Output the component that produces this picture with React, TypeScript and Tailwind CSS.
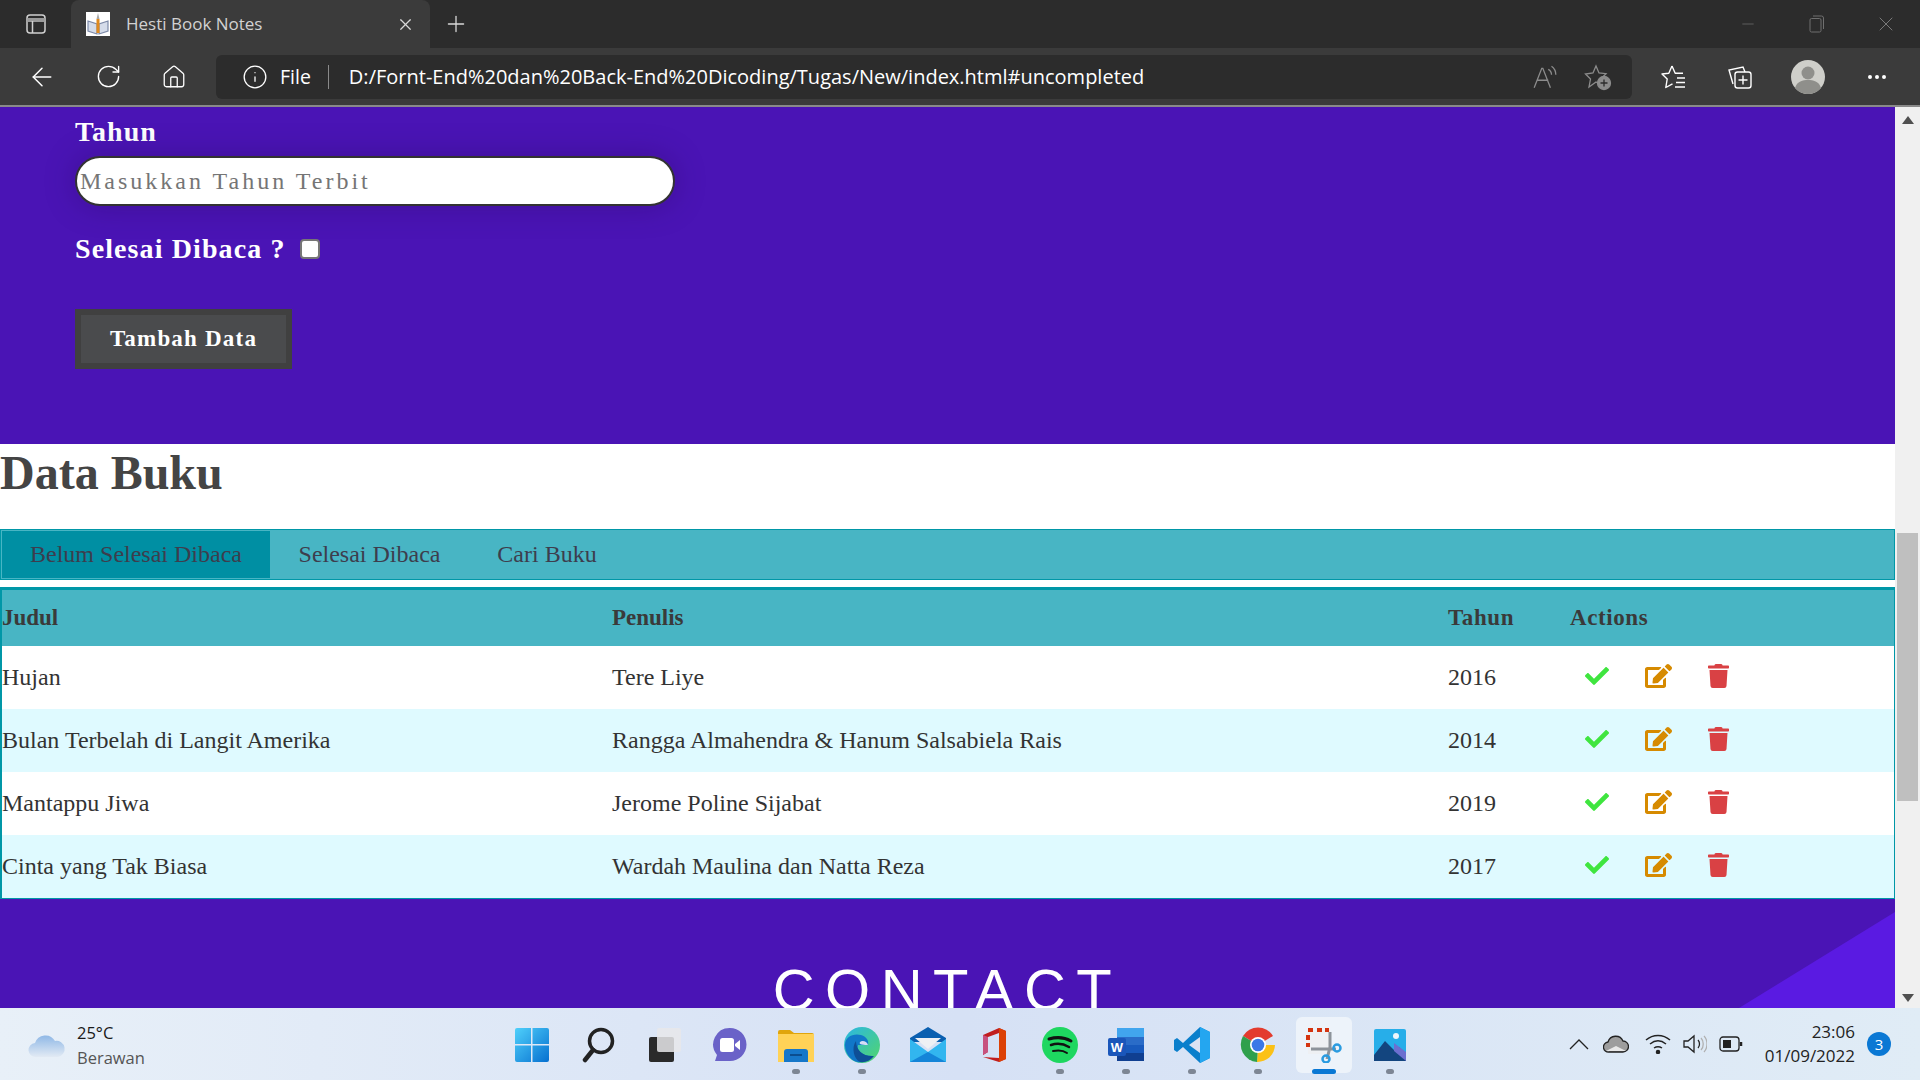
import {FaCheck, FaEdit, FaTrash} from "react-icons/fa";
import {Info, MoreHorizontal, Plus, RotateCw, ArrowLeft, Home, X, Minus} from "lucide-react";

const books = [
	{judul: "Hujan", penulis: "Tere Liye", tahun: "2016"},
	{judul: "Bulan Terbelah di Langit Amerika", penulis: "Rangga Almahendra & Hanum Salsabiela Rais", tahun: "2014"},
	{judul: "Mantappu Jiwa", penulis: "Jerome Poline Sijabat", tahun: "2019"},
	{judul: "Cinta yang Tak Biasa", penulis: "Wardah Maulina dan Natta Reza", tahun: "2017"},
];

function Favicon() {
	return (
		<svg width="24" height="24" viewBox="0 0 24 24">
			<rect width="24" height="24" fill="#fff" />
			<path d="M2 9l9 3v10l-9-3zM22 9l-9 3v10l9-3z" fill="#d5dcea" stroke="#7d8aa8" strokeWidth="1.2" />
			<rect x="10.5" y="7" width="3" height="14" fill="#e08a1e" />
			<path d="M10.5 7l1.5-6 1.5 6z" fill="#a8a8a8" />
		</svg>
	);
}

function BrowserChrome() {
	return (
		<div className="shrink-0 font-['Open_Sans',sans-serif]">
			<div className="flex h-12 items-end bg-[#2c2c2c]">
				<div className="flex h-12 w-[71px] items-center justify-center">
					<svg width="22" height="22" viewBox="0 0 22 22" fill="none" stroke="#d0d0d0" strokeWidth="1.5">
						<rect x="2" y="2" width="18" height="18" rx="3" />
						<path d="M2.5 7h17" strokeWidth="4" stroke="#9a9a9a" />
						<path d="M7.5 8v12" />
					</svg>
				</div>
				<div className="flex h-12 w-[359px] items-center rounded-t-lg bg-[#3b3b3b] pl-[15px] pr-[15px]">
					<Favicon />
					<span className="ml-[16px] flex-1 text-[17px] text-[#d2d2d2]">Hesti Book Notes</span>
					<X size={19} strokeWidth={1.5} color="#d8d8d8" />
				</div>
				<div className="flex h-12 w-[52px] items-center justify-center">
					<Plus size={26} strokeWidth={1.2} color="#d8d8d8" />
				</div>
				<div className="flex h-12 flex-1 items-center justify-end">
					<div className="flex w-[69px] justify-center"><Minus size={18} strokeWidth={1} color="#6f6f6f" /></div>
					<div className="flex w-[69px] justify-center">
						<svg width="16" height="18" viewBox="0 0 16 18" fill="none" stroke="#6f6f6f">
							<rect x="1" y="3.5" width="11" height="13.5" rx="1.5" />
							<path d="M4 1h8.5a2 2 0 0 1 2 2v11" />
						</svg>
					</div>
					<div className="flex w-[69px] justify-center"><X size={24} strokeWidth={1} color="#7a7a7a" /></div>
				</div>
			</div>
			<div className="flex h-[57px] items-center bg-[#3b3b3b]">
				<div className="flex w-[216px] items-center pl-[9px]">
					<div className="flex w-[66px] justify-center"><ArrowLeft size={30} strokeWidth={1.2} color="#fff" /></div>
					<div className="flex w-[66px] justify-center"><RotateCw size={27} strokeWidth={1.2} color="#fff" /></div>
					<div className="flex w-[66px] justify-center"><Home size={26} strokeWidth={1.2} color="#fff" /></div>
				</div>
				<div className="flex h-[44px] w-[1416px] items-center rounded-md bg-[#2c2c2c] pl-[26px] pr-[20px] text-white">
					<Info size={26} strokeWidth={1.2} />
					<span className="ml-[12px] text-[19.5px]">File</span>
					<span className="ml-[17px] h-[24px] w-px bg-[#8a8a8a]" />
					<span className="ml-[20px] flex-1 text-[20px]">
						D:/Fornt-End%20dan%20Back-End%20Dicoding/Tugas/New/index.html#uncompleted
					</span>
					<svg width="26" height="26" viewBox="0 0 24 24" fill="none" stroke="#8c8c8c" strokeWidth="1.2" className="mr-[26px]">
						<path d="M2 22L9 4h1l7 18M5 15h10" />
						<path d="M15 5c2 1 3 3 3 5M18 2c3 2 4 5 4 8" />
					</svg>
					<svg width="28" height="28" viewBox="0 0 28 28" fill="none" stroke="#8c8c8c" strokeWidth="1.3">
						<path d="M12 3l3 7 7 .7-5 5 1.500 7-6.500-3.700L5 24l1.500-8-5-5 7.500-1z" />
						<circle cx="20" cy="20" r="6.500" fill="#8c8c8c" />
						<path d="M20 16.500v7M16.500 20h7" stroke="#2c2c2c" />
					</svg>
				</div>
				<div className="flex flex-1 items-center pl-[9px]">
					<div className="flex w-[66px] justify-center">
						<svg width="28" height="28" viewBox="0 0 28 28" fill="none" stroke="#fff" strokeWidth="1.4" strokeLinejoin="round">
							<path d="M12 3l3.200 7.200H23M12 3L8.800 10.200 2 11l5.200 5-1.400 8.500 6.700-3.700" />
							<path d="M17 15h8M16 19.500h9M15 24h10" />
						</svg>
					</div>
					<div className="flex w-[66px] justify-center">
						<svg width="28" height="28" viewBox="0 0 28 28" fill="none" stroke="#fff" strokeWidth="1.4">
							<path d="M7 21L3 7l14-3 2 5" />
							<rect x="9" y="9" width="16" height="16" rx="2.500" />
							<path d="M17 12.500v9M12.500 17h9" />
						</svg>
					</div>
					<div className="flex w-[70px] justify-center">
						<svg width="34" height="34" viewBox="0 0 34 34">
							<circle cx="17" cy="17" r="17" fill="#cfcfca" />
							<circle cx="17" cy="13" r="6.500" fill="#8f8f8b" />
							<path d="M4 28c2-7 8-8 13-8s11 1 13 8a17 17 0 0 1-26 0z" fill="#8f8f8b" />
						</svg>
					</div>
					<div className="flex w-[68px] justify-center"><MoreHorizontal size={24} strokeWidth={2} color="#fff" /></div>
				</div>
			</div>
			<div className="h-[2px] bg-[#8a8a8a]" />
		</div>
	);
}

function FormSection() {
	return (
		<section className="flex h-[337px] shrink-0 flex-col items-start bg-[#4a14b5] pl-[75px] pt-[10px] text-white">
			<label className="text-[28px] font-bold leading-[30px] tracking-[1px]">Tahun</label>
			<input
				placeholder="Masukkan Tahun Terbit"
				className="mt-[9px] h-[50px] w-[600px] rounded-full border-2 border-[#333] bg-white pl-[3px] text-[24px] tracking-[3px] text-[#333] shadow-[0_0_30px_rgba(40,10,90,0.35)] outline-none placeholder:text-[#757575]"
			/>
			<div className="mt-[28px] flex items-center">
				<label className="text-[28px] font-bold leading-[30px] tracking-[1.100px]">Selesai Dibaca ?</label>
				<input type="checkbox" className="ml-[15px] h-[20px] w-[20px] appearance-none rounded-[4px] border-2 border-[#767676] bg-white" />
			</div>
			<button className="mt-[45px] h-[60px] w-[217px] border-[6px] border-[#404040] bg-[#4a4b4d] text-[23px] font-bold tracking-[1.2px] text-white">
				Tambah Data
			</button>
		</section>
	);
}

function DataSection() {
	return (
		<section className="shrink-0 bg-white text-[#333]">
			<h1 className="h-[85px] pt-[1px] text-[48px] font-bold leading-[56px] text-[#444]">Data Buku</h1>
			<nav className="flex h-[51px] items-stretch border border-[#0097a7] bg-[#48b5c4] p-px pb-[3px] text-[24px] text-[#3d3d4d]">
				<a className="-mb-[2px] flex w-[268px] items-center justify-center whitespace-nowrap bg-[#008fa3] pb-[2px]">Belum Selesai Dibaca</a>
				<a className="flex w-[199px] items-center justify-center whitespace-nowrap">Selesai Dibaca</a>
				<a className="flex w-[156px] items-center justify-center whitespace-nowrap">Cari Buku</a>
			</nav>
			<div className="mt-[7px] border-x border-b border-t-[3px] border-[#0097a7] border-l-2">
				<div className="grid h-[56px] grid-cols-[610px_836px_122px_1fr] items-center bg-[#48b5c4] text-[23px] font-bold text-[#3a3a3a]">
					<div>Judul</div>
					<div>Penulis</div>
					<div className="tracking-[0.6px]">Tahun</div>
					<div className="tracking-[0.6px]">Actions</div>
				</div>
				{books.map((book, i) => (
					<div
						key={book.judul}
						className={`grid h-[63px] grid-cols-[610px_836px_122px_1fr] items-center pb-[2px] text-[24px] text-[#333] ${i % 2 ? "bg-[#dffaff]" : "bg-white"}`}>
						<div>{book.judul}</div>
						<div>{book.penulis}</div>
						<div>{book.tahun}</div>
						<div className="flex items-center pb-[1px] pl-[15px]">
							<FaCheck size={24} color="#3fe53f" />
							<FaEdit size={24} color="#d68a00" className="ml-[36px] h-[24px] w-[27px]" />
							<FaTrash size={24} color="#d94144" className="ml-[36px] h-[24px] w-[21px]" />
						</div>
					</div>
				))}
			</div>
		</section>
	);
}

function ContactSection() {
	return (
		<section className="relative flex-1 overflow-hidden bg-[#4a14b5] text-white">
			<svg className="absolute bottom-0 right-0" width="156" height="96" viewBox="0 0 156 96">
				<path d="M0 96L156 0v96z" fill="#5a1ae2" />
			</svg>
			<h2 className="relative pt-[57px] text-center font-['Liberation_Sans',sans-serif] text-[58px] font-normal leading-[68px] tracking-[10.500px]">
				CONTACT
			</h2>
		</section>
	);
}

function Scrollbar() {
	return (
		<div className="flex w-[25px] shrink-0 flex-col items-center bg-[#f0f0f0]">
			<svg width="12" height="8" viewBox="0 0 12 8" className="mt-[9px]">
				<path d="M6 0l6 8H0z" fill="#505050" />
			</svg>
			<div className="mt-[409px] h-[268px] w-[21px] bg-[#bfbfbf]" />
			<div className="flex-1" />
			<svg width="12" height="8" viewBox="0 0 12 8" className="mb-[6px]">
				<path d="M6 8l6-8H0z" fill="#505050" />
			</svg>
		</div>
	);
}

const taskIcons = [
	<svg key="win" width="36" height="36" viewBox="0 0 36 36">
		<defs>
			<linearGradient id="win" x1="0" y1="0" x2="1" y2="1">
				<stop offset="0" stopColor="#4fd0fb" />
				<stop offset="1" stopColor="#0670d0" />
			</linearGradient>
		</defs>
		<path d="M1 3a2 2 0 0 1 2-2h14v16H1zM18.500 1H33a2 2 0 0 1 2 2v14H18.500zM1 18.500h16V35H3a2 2 0 0 1-2-2zM18.500 18.500H35V33a2 2 0 0 1-2 2H18.500z" fill="url(#win)" />
	</svg>,
	<svg key="search" width="36" height="36" viewBox="0 0 36 36" fill="none" stroke="#222" strokeWidth="3.500" strokeLinecap="round">
		<circle cx="21" cy="14" r="11.500" />
		<path d="M13 23l-8 10" strokeWidth="4.500" />
	</svg>,
	<svg key="tasks" width="36" height="36" viewBox="0 0 36 36">
		<rect x="3" y="10" width="25" height="25" rx="2" fill="#2a2a2a" />
		<rect x="11" y="1" width="24" height="24" rx="2" fill="#e8e8ea" fillOpacity="0.85" />
	</svg>,
	<svg key="chat" width="36" height="36" viewBox="0 0 36 36">
		<path d="M18 1a16.500 16.500 0 0 1 0 33H3l2-6A16.500 16.500 0 0 1 18 1z" fill="#6a62c8" />
		<rect x="8" y="11" width="14" height="14" rx="2.500" fill="#fff" />
		<path d="M23 17l5-4v10l-5-4z" fill="#fff" />
	</svg>,
	<svg key="folder" width="36" height="36" viewBox="0 0 36 36">
		<path d="M0 5a2 2 0 0 1 2-2h10l4 3h18a2 2 0 0 1 2 2v5H0z" fill="#e0a50c" />
		<path d="M0 7h36v28H0z" fill="#ffd257" />
		<path d="M6 25a3 3 0 0 1 3-3h18a3 3 0 0 1 3 3v10H6z" fill="#1677c9" />
		<rect x="12" y="27" width="12" height="2" fill="#0b4e8f" />
	</svg>,
	<svg key="edge" width="36" height="36" viewBox="0 0 36 36">
		<defs>
			<linearGradient id="edge" x1="0" y1="0" x2="1" y2="1">
				<stop offset="0" stopColor="#2ab6e6" />
				<stop offset="1" stopColor="#52d66a" />
			</linearGradient>
		</defs>
		<circle cx="18" cy="18" r="18" fill="url(#edge)" />
		<path d="M1 18c0-8 8-12 16-10 6 2 8 6 7 10H14c-2 6 5 11 14 11-4 5-10 7-15 6C6 33 1 26 1 18z" fill="#1177c8" />
		<path d="M12 14c0 9 7 16 18 15-4 5-9 7-14 6-6-3-9-14-4-21z" fill="#0e4f96" />
		<path d="M24 18c-1-4-6-5-8-3-1 2 0 3 8 3z" fill="#d6ddf4" />
	</svg>,
	<svg key="mail" width="36" height="36" viewBox="0 0 36 36">
		<path d="M0 11L18 0l18 11v4H0z" fill="#0a5fb0" />
		<path d="M5 11h26l-13 11z" fill="#eef0f4" />
		<path d="M0 12l18 13 18-13v23H0z" fill="#32b6ef" />
		<path d="M36 35H0l18-10z" fill="#1485d8" />
	</svg>,
	<svg key="office" width="36" height="36" viewBox="0 0 36 36">
		<path d="M7 8L23 1l7 3v28l-7 3-16-5 16 1V6L12 10v15l-5 3z" fill="#c11e1e" />
		<path d="M23 1l7 3v28l-7 3z" fill="#dc4105" />
		<path d="M7 8l5 2v15l-5 3z" fill="#c7517e" />
	</svg>,
	<svg key="spotify" width="36" height="36" viewBox="0 0 36 36" fill="none" stroke="#111" strokeLinecap="round">
		<circle cx="18" cy="18" r="18" fill="#1ed760" stroke="none" />
		<path d="M7 12c7-2 15-2 22 2" strokeWidth="3" />
		<path d="M9 18c6-2 13-1 18 2" strokeWidth="2.500" />
		<path d="M11 24c5-1 10-1 14 2" strokeWidth="2" />
	</svg>,
	<svg key="word" width="36" height="36" viewBox="0 0 36 36">
		<rect x="9" y="1" width="27" height="33" rx="2" fill="#2a6cc8" />
		<rect x="9" y="1" width="27" height="9" fill="#41a5ee" />
		<rect x="9" y="18" width="27" height="8" fill="#185abd" />
		<rect x="9" y="26" width="27" height="8" fill="#103f91" />
		<rect x="0" y="11" width="18" height="18" rx="2" fill="#1a56ba" />
		<text x="9" y="25" textAnchor="middle" fontSize="13" fontWeight="700" fill="#fff" fontFamily="Liberation Sans">W</text>
	</svg>,
	<svg key="code" width="36" height="36" viewBox="0 0 36 36">
		<path d="M26 0l10 5v26l-10 5L9 20l-6 5-3-2v-10l3-2 6 5z" fill="#0a7fcc" />
		<path d="M26 0l10 5v26l-10 5z" fill="#24a6f0" />
		<path d="M26 10L15 18l11 8z" fill="#dbe2f3" />
	</svg>,
	<svg key="chrome" width="36" height="36" viewBox="0 0 36 36">
		<path d="M18 18L3 9A17.500 17.500 0 0 1 33 9z" fill="#e33b2e" />
		<path d="M18 18H35A17.500 17.500 0 0 1 17 35z" fill="#fbc116" />
		<path d="M18 18l-1 17A17.500 17.500 0 0 1 3 9z" fill="#2fa04c" />
		<circle cx="18" cy="18" r="8" fill="#fff" />
		<circle cx="18" cy="18" r="6.300" fill="#3b78e7" />
	</svg>,
	<svg key="snip" width="36" height="36" viewBox="0 0 36 36" fill="none">
		<path d="M2 3h22v24H2z" fill="#eef0f3" />
		<path d="M2 3h5M11 3h5M19 3h4M2 8v5M2 16v4" stroke="#d4340f" strokeWidth="4" />
		<path d="M24 5v15l-3 12M5 22h25" stroke="#8d939a" strokeWidth="3" />
		<circle cx="31" cy="21" r="3.500" stroke="#2a9be0" strokeWidth="2.500" />
		<circle cx="20" cy="32" r="3.500" stroke="#2a9be0" strokeWidth="2.500" />
	</svg>,
	<svg key="photos" width="36" height="36" viewBox="0 0 36 36">
		<rect x="2" y="2" width="32" height="32" rx="2" fill="#27aee9" />
		<circle cx="24" cy="9" r="3" fill="#f0f6fb" />
		<path d="M2 28l11-14 10 10 4-4 7 8v6H2z" fill="#13457f" />
		<path d="M22 16l12 9v9L22 24z" fill="#6c6fd0" />
	</svg>,
];

const running = [4, 5, 8, 9, 10, 11, 12, 13];

function Taskbar() {
	return (
		<footer className="grid h-[72px] shrink-0 grid-cols-[1fr_auto_1fr] items-center bg-gradient-to-r from-[#e8f0f8] via-[#d6e1f5] to-[#e0ecf6] font-['Open_Sans',sans-serif]">
			<div className="flex items-center pl-[28px]">
				<svg width="38" height="28" viewBox="0 0 38 28">
					<defs>
						<linearGradient id="cloud" x1="0" y1="0" x2="0" y2="1">
							<stop offset="0" stopColor="#8fb8e6" />
							<stop offset="1" stopColor="#e2eaf4" />
						</linearGradient>
					</defs>
					<path d="M8 27a7 7 0 0 1-1-14 11 11 0 0 1 20-2 8 8 0 0 1 3 16z" fill="url(#cloud)" />
				</svg>
				<div className="ml-[11px] flex flex-col gap-[3px] pt-[2px] text-[16.500px] leading-[22px]">
					<span className="text-[#1a1a1a]">25°C</span>
					<span className="text-[#555]">Berawan</span>
				</div>
			</div>
			<div className="flex h-[72px] items-center pl-[1px]">
				{taskIcons.map((icon, i) => (
					<div key={i} className="relative flex h-[72px] w-[66px] items-center justify-center pt-[1px]">
						{i === 12 && <div className="absolute left-[5px] top-[9px] h-[56px] w-[56px] rounded-md bg-[#edf3fa]" />}
						<div className="relative flex">{icon}</div>
						{running.includes(i) && (
							<div className={`absolute top-[61px] h-[5px] rounded-full ${i === 12 ? "w-[24px] bg-[#0a78d4]" : "w-[8px] bg-[#7d8694]"}`} />
						)}
					</div>
				))}
			</div>
			<div className="flex items-center justify-end pr-[29px]">
				<svg width="20" height="12" viewBox="0 0 20 12" fill="none" stroke="#222" strokeWidth="1.300" className="mr-[14px]">
					<path d="M1 11l9-9 9 9" />
				</svg>
				<svg width="26" height="18" viewBox="0 0 26 18" className="mr-[16px]">
					<path d="M6 17a5 5 0 0 1-1-10 8 8 0 0 1 15-1 5.500 5.500 0 0 1 0 11z" fill="#9d9d9d" stroke="#222" strokeWidth="1.300" />
					<path d="M3 16l10-5 10 5z" fill="#e8e8e8" />
				</svg>
				<svg width="26" height="20" viewBox="0 0 26 20" fill="none" stroke="#222" strokeWidth="1.500" className="mr-[12px]">
					<path d="M1 6c7-6 17-6 24 0M5 10c5-4 11-4 16 0M9 14c3-2 5-2 8 0" />
					<circle cx="13" cy="18" r="1.500" fill="#222" />
				</svg>
				<svg width="24" height="20" viewBox="0 0 24 20" fill="none" stroke="#222" strokeWidth="1.300" className="mr-[12px]">
					<path d="M1 7h4l6-5v16l-6-5H1z" />
					<path d="M15 6c2 2 2 6 0 8" />
					<path d="M18 4c3 3 3 9 0 12M21 2c4 4 4 12 0 16" stroke="#b0b0b0" />
				</svg>
				<svg width="24" height="16" viewBox="0 0 24 16" fill="none" stroke="#222" strokeWidth="1.300" className="mr-[22px]">
					<rect x="1" y="1" width="19" height="14" rx="3" />
					<rect x="4" y="4" width="8" height="8" fill="#222" stroke="none" />
					<path d="M22 6v4" strokeWidth="2.500" />
				</svg>
				<div className="flex flex-col items-end text-[17px] leading-[24px] text-[#222]">
					<span>23:06</span>
					<span>01/09/2022</span>
				</div>
				<div className="ml-[12px] flex h-[24px] w-[24px] items-center justify-center rounded-full bg-[#0a78d4] text-[15px] text-white">3</div>
			</div>
		</footer>
	);
}

export default function App() {
	return (
		<div className="flex h-screen flex-col overflow-hidden font-['Liberation_Serif',serif]">
			<BrowserChrome />
			<div className="flex min-h-0 flex-1">
				<main className="flex min-w-0 flex-1 flex-col">
					<FormSection />
					<DataSection />
					<ContactSection />
				</main>
				<Scrollbar />
			</div>
			<Taskbar />
		</div>
	);
}
